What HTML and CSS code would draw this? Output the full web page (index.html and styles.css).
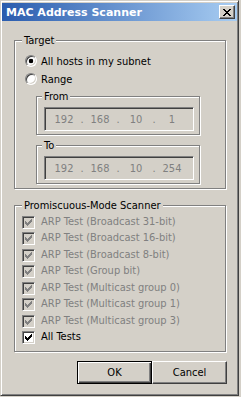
FILE: index.html
```html
<!DOCTYPE html>
<html lang="en">
  <head>
    <meta charset="UTF-8" />
    <title>MAC Address Scanner</title>
    <link rel="stylesheet" href="styles.css">
  </head>

  <body>
    <div class="window">
      <div class="titlebar">
        <span class="title">MAC Address Scanner</span>
        <button class="close">
          <svg width="8" height="7" viewBox="0 0 8 7">
            <path d="M0 0h2v1h-2z M6 0h2v1h-2z M1 1h2v1h-2z M5 1h2v1h-2z M2 2h4v1h-4z M3 3h2v1h-2z M2 4h4v1h-4z M1 5h2v1h-2z M5 5h2v1h-2z M0 6h2v1h-2z M6 6h2v1h-2z" fill="#000" />
          </svg>
        </button>
      </div>

      <div class="client">
        <fieldset class="group target">
          <legend>Target</legend>
          <label class="option"><span class="radio checked"></span>All hosts in my subnet</label>
          <label class="option"><span class="radio"></span>Range</label>

          <fieldset class="group range">
            <legend>From</legend>
            <div class="ipbox">
              <span>192</span><i>.</i><span>168</span><i>.</i><span>10</span><i>.</i><span>1</span>
            </div>
          </fieldset>

          <fieldset class="group range to">
            <legend>To</legend>
            <div class="ipbox">
              <span>192</span><i>.</i><span>168</span><i>.</i><span>10</span><i>.</i><span>254</span>
            </div>
          </fieldset>
        </fieldset>

        <fieldset class="group scanner">
          <legend>Promiscuous-Mode Scanner</legend>
          <label class="check disabled"><span class="box"><svg width="9" height="9" viewBox="0 0 9 9"><path d="M1 3h1v3h-1z M2 4h1v3h-1z M3 5h1v3h-1z M4 4h1v3h-1z M5 3h1v3h-1z M6 2h1v3h-1z M7 1h1v3h-1z" /></svg></span>ARP Test (Broadcast 31-bit)</label>
          <label class="check disabled"><span class="box"><svg width="9" height="9" viewBox="0 0 9 9"><path d="M1 3h1v3h-1z M2 4h1v3h-1z M3 5h1v3h-1z M4 4h1v3h-1z M5 3h1v3h-1z M6 2h1v3h-1z M7 1h1v3h-1z" /></svg></span>ARP Test (Broadcast 16-bit)</label>
          <label class="check disabled"><span class="box"><svg width="9" height="9" viewBox="0 0 9 9"><path d="M1 3h1v3h-1z M2 4h1v3h-1z M3 5h1v3h-1z M4 4h1v3h-1z M5 3h1v3h-1z M6 2h1v3h-1z M7 1h1v3h-1z" /></svg></span>ARP Test (Broadcast 8-bit)</label>
          <label class="check disabled"><span class="box"><svg width="9" height="9" viewBox="0 0 9 9"><path d="M1 3h1v3h-1z M2 4h1v3h-1z M3 5h1v3h-1z M4 4h1v3h-1z M5 3h1v3h-1z M6 2h1v3h-1z M7 1h1v3h-1z" /></svg></span>ARP Test (Group bit)</label>
          <label class="check disabled"><span class="box"><svg width="9" height="9" viewBox="0 0 9 9"><path d="M1 3h1v3h-1z M2 4h1v3h-1z M3 5h1v3h-1z M4 4h1v3h-1z M5 3h1v3h-1z M6 2h1v3h-1z M7 1h1v3h-1z" /></svg></span>ARP Test (Multicast group 0)</label>
          <label class="check disabled"><span class="box"><svg width="9" height="9" viewBox="0 0 9 9"><path d="M1 3h1v3h-1z M2 4h1v3h-1z M3 5h1v3h-1z M4 4h1v3h-1z M5 3h1v3h-1z M6 2h1v3h-1z M7 1h1v3h-1z" /></svg></span>ARP Test (Multicast group 1)</label>
          <label class="check disabled"><span class="box"><svg width="9" height="9" viewBox="0 0 9 9"><path d="M1 3h1v3h-1z M2 4h1v3h-1z M3 5h1v3h-1z M4 4h1v3h-1z M5 3h1v3h-1z M6 2h1v3h-1z M7 1h1v3h-1z" /></svg></span>ARP Test (Multicast group 3)</label>
          <label class="check"><span class="box"><svg width="9" height="9" viewBox="0 0 9 9"><path d="M1 3h1v3h-1z M2 4h1v3h-1z M3 5h1v3h-1z M4 4h1v3h-1z M5 3h1v3h-1z M6 2h1v3h-1z M7 1h1v3h-1z" /></svg></span>All Tests</label>
        </fieldset>

        <div class="buttons">
          <button class="btn default">OK</button>
          <button class="btn">Cancel</button>
        </div>
      </div>
    </div>
  </body>
</html>
```

FILE: styles.css
```css
* {
  box-sizing: border-box;
}

body {
  margin: 0;
  background: #d4d0c8;
  font-family: "DejaVu Sans Condensed", "Liberation Sans", sans-serif;
  font-size: 11px;
  color: #000;
}

.window {
  width: 239px;
  height: 396px;
  padding: 1px;
  background: #d4d0c8;
  border: 1px solid;
  border-color: #d4d0c8 #404040 #404040 #d4d0c8;
  box-shadow: inset 1px 1px #fff, inset -1px -1px #808080;
}

.titlebar {
  margin-top: 1px;
  height: 18px;
  display: flex;
  align-items: center;
  justify-content: space-between;
  padding: 0 2px 0 4px;
  background: linear-gradient(to right, #2a5cae, #a8cdf2);
}

.title {
  font-family: "DejaVu Sans", sans-serif;
  font-weight: bold;
  font-size: 11px;
  color: #fff;
}

.close {
  width: 16px;
  height: 14px;
  padding: 0;
  display: flex;
  align-items: center;
  justify-content: center;
  background: #d4d0c8;
  border: 1px solid;
  border-color: #fff #404040 #404040 #fff;
  box-shadow: inset -1px -1px #808080;
}

/* group boxes */
.group {
  margin: 0;
  min-width: 0;
  border: 1px solid #808080;
  box-shadow: inset 1px 1px #fff, 1px 1px #fff;
}

.group legend {
  padding: 0 2px;
  line-height: 13px;
  background: #d4d0c8;
}

.target {
  margin: 13px 11px 0 12px;
  padding: 5px 10px 4px 10px;
}

.target > legend {
  margin-left: -3px;
}

.option {
  display: flex;
  align-items: center;
  height: 18px;
}

.radio {
  width: 12px;
  height: 12px;
  margin-right: 4px;
  border-radius: 50%;
  border: 1px solid;
  border-color: #808080 #fff #fff #808080;
  box-shadow: inset 1px 1px #404040, inset -1px -1px #d4d0c8;
  background: #fff;
}

.radio.checked {
  background: radial-gradient(circle, #000 2px, #fff 2.6px);
}

.range {
  margin: 2px 15px 0 11px;
  padding: 4px 5px 3px 7px;
}

.range legend {
  margin-left: -2px;
}

.range.to {
  margin-top: 4px;
}

.ipbox {
  width: 150px;
  height: 24px;
  display: flex;
  align-items: center;
  padding-left: 5px;
  color: #808080;
  border: 1px solid;
  border-color: #808080 #fff #fff #808080;
  box-shadow: inset 1px 1px #404040, inset -1px -1px #d4d0c8;
}

.ipbox span {
  width: 28px;
  text-align: center;
}

.ipbox i {
  width: 8px;
  font-style: normal;
  text-align: center;
}

.scanner {
  margin: 10px 11px 0 12px;
  padding: 2px 7px 5px 7px;
}

.check {
  display: flex;
  align-items: flex-start;
  height: 16px;
  line-height: 16px;
}

.check:nth-of-type(even) {
  height: 17px;
}

.check .box {
  width: 13px;
  height: 13px;
  margin-top: 2px;
  margin-right: 6px;
  padding: 1px;
  background: #fff;
  border: 1px solid;
  border-color: #808080 #fff #fff #808080;
  box-shadow: inset 1px 1px #404040, inset -1px -1px #d4d0c8;
}

.check .box svg {
  display: block;
  fill: #000;
}

.check.disabled {
  color: #808080;
}

.check.disabled .box {
  background: #d4d0c8;
}

.check.disabled .box svg {
  fill: #808080;
}

.buttons {
  display: flex;
  justify-content: flex-end;
  margin: 9px 10px 0 0;
}

.btn {
  width: 75px;
  height: 23px;
  padding: 0;
  font-family: inherit;
  font-size: 11px;
  color: #000;
  background: #d4d0c8;
  border: 1px solid;
  border-color: #fff #404040 #404040 #fff;
  box-shadow: inset -1px -1px #808080;
}

.btn.default {
  border-color: #000;
  box-shadow: inset 1px 1px #fff, inset -1px -1px #404040, inset -2px -2px #808080;
}
```
